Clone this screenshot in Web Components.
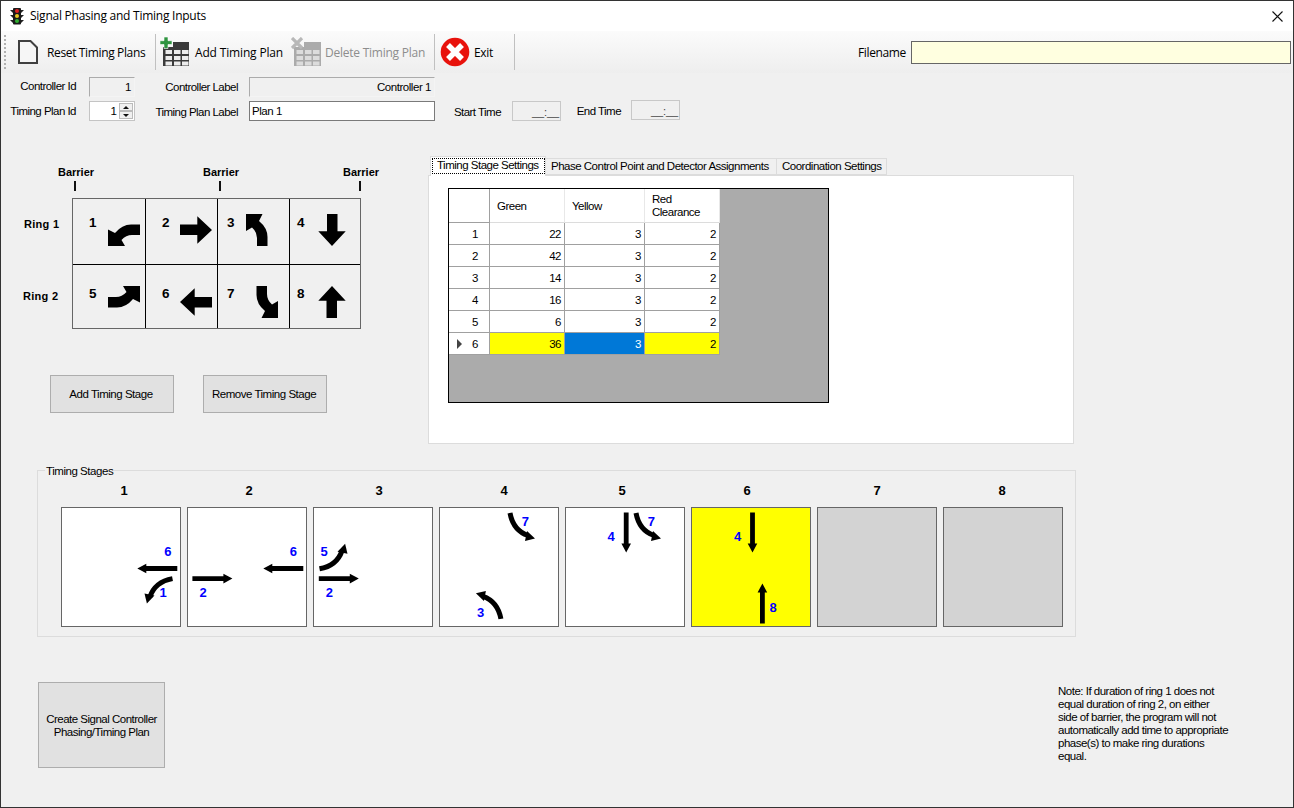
<!DOCTYPE html>
<html><head><meta charset="utf-8"><title>Signal Phasing and Timing Inputs</title>
<style>
html,body{margin:0;padding:0;background:#f0f0f0}
body{width:1294px;height:808px;overflow:hidden;font:11px/13px "Liberation Sans",Arial,sans-serif;color:#000}
</style></head><body>
<app-window>
  <title-bar>Signal Phasing and Timing Inputs</title-bar>
  <tool-strip>
    <tool-item style="margin-left:12px;width:127px" gap="9">
      <svg slot="icon" width="20" height="24" viewBox="0 0 20 24"><path d="M1 1H12.5L19 7.5V23H1Z" fill="#f6f6f6" stroke="#404040" stroke-width="2"/></svg>
      Reset Timing Plans</tool-item>
    <tool-sep style="margin-left:10px"></tool-sep>
    <tool-item style="margin-left:4px;width:124px;letter-spacing:-.16px" gap="5"><table-icon slot="icon" mode="add"></table-icon>Add Timing Plan</tool-item>
    <tool-item style="margin-left:7px;width:135px;letter-spacing:-.24px" gap="4" disabled><table-icon slot="icon" mode="del"></table-icon>Delete Timing Plan</tool-item>
    <tool-sep style="margin-left:8px"></tool-sep>
    <tool-item style="margin-left:5px;width:54px" gap="4">
      <svg slot="icon" width="30" height="30" viewBox="0 0 30 30"><circle cx="15" cy="15" r="14.3" fill="#e8120c"/><path d="M8 8L22 22M22 8L8 22" stroke="#fff" stroke-width="5.5" fill="none"/></svg>
      Exit</tool-item>
    <tool-sep style="margin-left:20px"></tool-sep>
    <file-name-field>Filename</file-name-field>
  </tool-strip>
  <form-grid>
    <form-label style="grid-area:1/1;padding-bottom:2px">Controller Id</form-label>
    <field-box style="grid-area:1/3" align="right">1</field-box>
    <form-label style="grid-area:1/4;margin-right:1px">Controller Label</form-label>
    <field-box style="grid-area:1/6" align="right">Controller 1</field-box>
    <form-label style="grid-area:2/1">Timing Plan Id</form-label>
    <spin-box style="grid-area:2/3">1</spin-box>
    <form-label style="grid-area:2/4;padding-top:2px;margin-right:1px">Timing Plan Label</form-label>
    <field-box style="grid-area:2/6" edit>Plan 1</field-box>
    <form-label style="grid-area:2/8;padding-top:2px;margin-right:1px">Start Time</form-label>
    <time-box style="grid-area:2/10"></time-box>
    <form-label style="grid-area:2/12">End Time</form-label>
    <time-box style="grid-area:2/14" up></time-box>
  </form-grid>
  <main-row>
    <phase-panel></phase-panel>
    <tab-panel>
      <data-grid></data-grid>
    </tab-panel>
  </main-row>
  <stage-group legend="Timing Stages">
    <stage-box n="1" off="63" items="w 76.5 61.5;c 111.5 71.6 90;t 6 106.8 43.7;t 1 102 84.7"></stage-box>
    <stage-box n="2" off="62" items="e 5.4 71.6;w 76.5 61.5;t 2 16 84.7;t 6 106.4 43.7"></stage-box>
    <stage-box n="3" off="66" items="e 5.8 71.6;c 6.5 61.8 -90;t 5 11.2 43.7;t 2 16.3 84.7"></stage-box>
    <stage-box n="4" off="65" items="c 71 6 0;c 61.9 111.9 180;t 7 86.4 13.8;t 3 41.5 104.5"></stage-box>
    <stage-box n="5" off="57" items="s 61.2 5.4;c 71 6 0;t 4 46.2 29.2;t 7 86.4 13.8"></stage-box>
    <stage-box n="6" off="56" fill="#ffff00" items="s 61.5 5.4;n 71.4 116.6;t 4 46.6 29.2;t 8 82 99.5"></stage-box>
    <stage-box n="7" off="60" fill="#d3d3d3"></stage-box>
    <stage-box n="8" off="59" fill="#d3d3d3"></stage-box>
  </stage-group>
  <bottom-row>
    <action-button style="width:127px;height:86px;padding-top:1px;letter-spacing:-.5px">Create Signal Controller<br>Phasing/Timing Plan</action-button>
    <note-text>Note: If duration of ring 1 does not<br>equal duration of ring 2, on either<br>side of barrier, the program will not<br>automatically add time to appropriate<br>phase(s) to make ring durations<br>equal.</note-text>
  </bottom-row>
</app-window>
<script>
const SEGOE='"Open Sans","Noto Sans",sans-serif';
const MS='"Liberation Sans",Arial,sans-serif';
function def(name,css,html,setup){
  customElements.define(name,class extends HTMLElement{
    constructor(){super();const s=this.attachShadow({mode:'open'});
      s.innerHTML='<style>'+css+'</style>'+(typeof html==='function'?html(this):html);}
    connectedCallback(){ if(setup) setup(this,this.shadowRoot); }
  });
}
def('app-window',`:host{display:flex;flex-direction:column;box-sizing:border-box;width:1294px;height:808px;border:1px solid #333;background:#f0f0f0;overflow:hidden}`,`<slot></slot>`);
def('title-bar',`:host{display:flex;align-items:center;height:30px;background:#fff;font:12px/16px ${SEGOE};letter-spacing:-.25px;flex:none}
  svg.i{margin-left:8px;margin-right:5px;flex:none} svg.x{margin-left:auto;margin-right:10px;flex:none}`,
 `<svg class="i" width="16" height="18" viewBox="0 0 16 18"><path d="M1 3h3v3zM15 3h-3v3zM1 8h3v3zM15 8h-3v3zM1 13h3v3zM15 13h-3v3z" fill="#222"/><rect x="4" y="1" width="8" height="16.5" rx="1" fill="#1a1a1a"/><circle cx="8" cy="4" r="2" fill="#e02020"/><circle cx="8" cy="9" r="2" fill="#e8c820"/><circle cx="8" cy="14" r="2" fill="#30b030"/></svg><span><slot></slot></span><svg class="x" width="11" height="11" viewBox="0 0 11 11"><path d="M.5 .5L10.5 10.5M10.5 .5L.5 10.5" stroke="#111" stroke-width="1.1" fill="none"/></svg>`);
def('tool-strip',`:host{display:flex;align-items:center;height:42px;flex:none;background:linear-gradient(#fbfbfb,#eeeeee)}
  .g{width:2px;height:34px;margin-left:3px;background:repeating-linear-gradient(#b0b0b0 0 2px,transparent 2px 4px);flex:none}`,`<div class="g"></div><slot></slot>`);
def('tool-item',`:host{display:flex;align-items:center;flex:none;font:12px/16px ${SEGOE};letter-spacing:-.36px;white-space:nowrap}
  :host([disabled]){color:#8d8d8d} .ic{display:flex;flex:none} .t{padding-top:2px}`,
 e=>`<span class="ic" style="margin-right:${e.getAttribute('gap')||6}px"><slot name="icon"></slot></span><span class="t"><slot></slot></span>`);
def('tool-sep',`:host{display:block;width:1px;height:36px;background:#c0c0c0;flex:none}`,``);
def('table-icon',`:host{display:block;width:30px;height:30px;flex:none}`,e=>{
  const del=e.getAttribute('mode')==='del',d=del?'#ababab':'#3a3a3a',c=del?'#dcdcdc':'#ececec';
  let cells='';for(const x of [5.5,14,22])for(const y of [13,19,24.5])cells+=`<rect x="${x}" y="${y}" width="6.5" height="4" fill="${c}"/>`;
  const top=del?`<path d="M1 1L11 11M11 1L1 11" stroke="#b8b8b8" stroke-width="3.2" fill="none"/>`:
   `<path d="M0 7.5V3.7H4V0H8V3.7H12V7.5H8V11.5H4V7.5Z" fill="#2f9440" stroke="#fff" stroke-width=".6"/>`;
  return `<svg width="30" height="30" viewBox="0 0 30 30"><path d="M3 10H13V5H${del?31:29}V29H3Z" fill="${d}"/>${cells}${top}</svg>`;});
def('file-name-field',`:host{display:flex;align-items:center;margin-left:343px;flex:none;font:12px/16px ${SEGOE};letter-spacing:-.36px}
  .l{width:53px;flex:none;padding-top:2px} .b{box-sizing:border-box;width:380px;height:23px;border:1px solid #666;background:#ffffe0}`,`<span class="l"><slot></slot></span><div class="b"></div>`);
def('form-grid',`:host{display:grid;flex:none;grid-template-columns:75px 13px 46px 104px 10px 186px 19px 48px 10px 49px 15px 45px 10px 49px;grid-template-rows:20px 20px;row-gap:4px;margin-top:4px}`,`<slot></slot>`);
def('form-label',`:host{display:flex;align-items:center;justify-content:flex-end;white-space:nowrap;font:11.5px/13px ${MS};letter-spacing:-.53px;box-sizing:border-box}`,`<slot></slot>`);
def('field-box',`:host{box-sizing:border-box;display:flex;align-items:center;padding:1px 3px 0 2px;height:20px;border:1px solid #ababab;border-right-color:#f4f4f4;border-bottom-color:#f4f4f4;background:#f0f0f0;font:11.5px/13px ${MS};letter-spacing:-.45px}
  :host([align=right]){justify-content:flex-end}:host([edit]){background:#fff;border-color:#7a7a7a}`,`<slot></slot>`);
def('spin-box',`:host{box-sizing:border-box;display:flex;align-items:center;justify-content:flex-end;height:20px;border:1px solid #c4c4c4;background:#fff;font:11.5px/13px ${MS}}
 .a{display:flex;flex-direction:column;width:14px;height:16px;margin-left:2px;margin-right:1px;flex:none}
 .a span{flex:1;background:#f0f0f0;display:flex;align-items:center;justify-content:center;border:1px solid #bbb}
 i{display:block;border-left:3px solid transparent;border-right:3px solid transparent}`,
 `<slot></slot><div class="a"><span><i style="border-bottom:3px solid #111"></i></span><span><i style="border-top:3px solid #111"></i></span></div>`);
def('time-box',`:host{box-sizing:border-box;display:flex;align-items:center;justify-content:flex-end;height:20px;border:1px solid #c8c8c8;background:#f0f0f0;font:11px/13px ${MS};color:#444;padding:2px 1px 0 0;letter-spacing:-.1px}
 :host([up]){margin-top:-1px}`,`__:__`);
def('main-row',`:host{display:flex;flex:none;margin-top:36px;height:286px}`,`<slot></slot>`);
const ARROW_STRAIGHT='M0 10.5H17.3V2.3L32 16L17.3 29.7V21H0Z';
const ARROW_TURN='M32 10.5H23Q14 10.5 7 19L0 15.5V32H17L13.5 26Q18 21 24 21H32Z';
function ph(n,nx,ix,top,ntop,kind,rot){return `<phase-cell n="${n}" nx="${nx}" ix="${ix}" top="${top}" ntop="${ntop}" kind="${kind}" rot="${rot}"></phase-cell>`;}
def('phase-cell',`:host{display:flex;align-items:flex-start;box-sizing:border-box;border-left:1px solid #000;border-top:1px solid #000}
 :host(.first){border-left:0} :host(.toprow){border-top:0}
 b{font:bold 13.5px/14px ${MS};width:8px;flex:none} svg{flex:none;display:block}`,
 e=>{const a=k=>e.getAttribute(k),nx=+a('nx'),ix=+a('ix');
  const p=a('kind')==='t'?ARROW_TURN:ARROW_STRAIGHT;
  return `<b style="margin-left:${nx}px;margin-top:${a('ntop')}px">${a('n')}</b><svg style="margin-left:${ix-nx-8}px;margin-top:${a('top')}px" width="32" height="32" viewBox="0 0 32 32"><path d="${p}" transform="rotate(${a('rot')} 16 16)" fill="#000"/></svg>`;},
 e=>{const n=+e.getAttribute('n'); if(n%4===1) e.classList.add('first'); if(n<=4) e.classList.add('toprow');});
def('barrier-mark',`:host{display:flex;flex-direction:column;align-items:center;width:60px;flex:none}
 b{font:bold 11px/14px ${MS}} i{display:block;width:2px;height:10px;background:#111;margin-top:2px;margin-right:3px}`,`<b>Barrier</b><i></i>`);
def('phase-panel',`:host{display:flex;flex-direction:column;width:427px;flex:none;padding-top:8px;box-sizing:border-box}
 .bars{display:flex;padding-left:45px;column-gap:85px} .bars barrier-mark:last-child{margin-left:-5px}
 .body{display:flex;margin-top:7px}
 .rings{width:71px;flex:none;font:bold 11px/14px ${MS};letter-spacing:.3px;padding:19px 0 0 23px;box-sizing:border-box}
 .rings div+div{margin-top:58px;margin-left:-1px}
 .t{display:grid;grid-template-columns:72px 72px 72px 71px;grid-template-rows:65px 65px;border:1px solid #666;width:287px;height:129px;overflow:hidden}
 .btns{display:flex;margin:46px 0 0 49px;column-gap:29px}`,
 `<div class="bars"><barrier-mark></barrier-mark><barrier-mark></barrier-mark><barrier-mark></barrier-mark></div>
 <div class="body"><div class="rings"><div>Ring 1</div><div>Ring 2</div></div><div class="t">
 ${ph(1,16,35,15,17,'t',0)}${ph(2,16,34,15,17,'s',0)}${ph(3,9,28,15,17,'t',90)}${ph(4,7,26,15,17,'s',90)}
 ${ph(5,16,35,21,22,'t',180)}${ph(6,16,34,21,22,'s',180)}${ph(7,9,28,21,22,'t',270)}${ph(8,7,26,21,22,'s',270)}
 </div></div>
 <div class="btns"><action-button style="width:124px;height:38px;padding-right:2px">Add Timing Stage</action-button><action-button style="width:124px;height:38px;padding-right:2px">Remove Timing Stage</action-button></div>`);
def('action-button',`:host{display:flex;align-items:center;justify-content:center;text-align:center;box-sizing:border-box;flex:none;background:#e1e1e1;border:1px solid #adadad;font:11.5px/13px ${MS};letter-spacing:-.47px}`,`<span><slot></slot></span>`);
def('tab-panel',`:host{display:flex;flex-direction:column;width:646px;flex:none;height:287px;font:11.5px/13px ${MS};letter-spacing:-.5px}
 .s{display:flex;align-items:flex-end;height:18px;padding-left:2px;flex:none}
 .tab{box-sizing:border-box;height:17px;border:1px solid #dcdcdc;border-left:0;background:#f0f0f0;display:flex;align-items:center;padding-left:5px;white-space:nowrap}
 .sel{height:20px;width:116px;margin-bottom:-1px;background:#fff;border:1px solid #dcdcdc;border-bottom:0;position:relative;z-index:1;padding:0;display:block}
 .sel span{display:block;box-sizing:border-box;height:16px;margin:1px 0 0 1px;width:113px;border:1px dotted #000;padding:0 0 0 4px;line-height:13px}
 .p{flex:1;background:#fff;border:1px solid #dcdcdc;padding:12px 0 0 19px}`,
 `<div class="s"><div class="tab sel"><span>Timing Stage Settings</span></div><div class="tab" style="width:231px">Phase Control Point and Detector Assignments</div><div class="tab" style="width:110px">Coordination Settings</div></div><div class="p"><slot></slot></div>`);
def('data-grid',`:host{display:block;box-sizing:border-box;width:381px;height:215px;border:1px solid #000;background:#ababab;font:11.5px/13px ${MS};letter-spacing:-.5px}
 .g{display:grid;grid-template-columns:41px 75px 80px 75px;grid-template-rows:34px repeat(6,22px);width:271px}
 .g>div{box-sizing:border-box;background:#fff;border-right:1px solid #a0a0a0;border-bottom:1px solid #a0a0a0;display:flex;align-items:center;justify-content:flex-end;padding:1px 3px 0 0}
 .g>.h{justify-content:flex-start;padding:1px 0 0 7px;border-right-color:#e8e8e8;border-bottom-color:#dcdcdc}
 .g>.h0{border-right-color:#a0a0a0;border-bottom-color:#a0a0a0;background:#fff}
 .g>.r{justify-content:flex-end;padding-right:11px}
 .g>.y{background:#ff0}.g>.b{background:#0078d7;color:#fff}
 i{display:block;margin-right:10px;border-left:5px solid #444;border-top:5px solid transparent;border-bottom:5px solid transparent}`,
 ()=>{const rows=[[22,3,2],[42,3,2],[14,3,2],[16,3,2],[6,3,2],[36,3,2]];
  let h=`<div class="g"><div class="h h0"></div><div class="h">Green</div><div class="h">Yellow</div><div class="h"><span>Red<br>Clearance</span></div>`;
  rows.forEach((r,i)=>{const last=i===5;
   h+=`<div class="r">${last?'<i></i>':''}${i+1}</div><div class="${last?'y':''}">${r[0]}</div><div class="${last?'b':''}">${r[1]}</div><div class="${last?'y':''}">${r[2]}</div>`;});
  return h+'</div>';});
def('stage-group',`:host{display:block;box-sizing:border-box;width:1039px;height:167px;margin:27px 0 0 36px;border:1px solid #dcdcdc;flex:none}
 .l{width:fit-content;margin:-6px 0 0 7px;padding:0 1px;background:#f0f0f0;font:11.5px/13px ${MS};letter-spacing:-.45px}
 .g{display:grid;grid-template-columns:repeat(8,120px);column-gap:6px;margin:0 0 0 23px}`,
 e=>`<div class="l">${e.getAttribute('legend')}</div><div class="g"><slot></slot></div>`);
function thin(x,y,rot){return `<polygon transform="translate(${x} ${y}) rotate(${rot})" points="0,-2.4 31,-2.4 31,-4.8 40,0 31,4.8 31,2.4 0,2.4"/>`;}
function curve(x,y,rot){return `<g transform="translate(${x} ${y}) rotate(${rot})"><path d="M0 0C2 11 8 19 18 22.5" fill="none" stroke="#000" stroke-width="5"/><polygon points="25,25.6 15,28 17,18"/></g>`;}
def('stage-box',`:host{display:flex;flex-direction:column}
 .n{font:bold 13px/15px ${MS};height:15px;margin-top:5px;width:12px;text-align:center}
 .b{box-sizing:border-box;width:120px;height:120px;margin-top:9px;border:1px solid #666;background:#fff;display:block}
 svg{display:block} text{font:bold 13px "Liberation Sans",Arial,sans-serif;fill:#0000ff;text-anchor:middle}`,
 e=>{let s='';const fill=e.getAttribute('fill')||'#fff';
  (e.getAttribute('items')||'').split(';').filter(Boolean).forEach(it=>{const p=it.trim().split(' ');
   const X=+p[1],Y=+p[2];
   if(p[0]==='e')s+=thin(X,Y,0);
   if(p[0]==='w')s+=thin(X+39.8,Y,180);
   if(p[0]==='s')s+=thin(X,Y,90);
   if(p[0]==='n')s+=thin(X,Y,-90);
   if(p[0]==='c')s+=curve(X,Y,+p[3]);
   if(p[0]==='t')s+=`<text x="${p[2]}" y="${+p[3]+5}">${p[1]}</text>`;});
  return `<div class="n" style="margin-left:${+e.getAttribute('off')-6}px">${e.getAttribute('n')}</div><div class="b" style="background:${fill}"><svg width="118" height="118" viewBox="1 1 118 118">${s}</svg></div>`;});
def('bottom-row',`:host{display:flex;margin:45px 0 0 37px;flex:none;align-items:flex-start}`,`<slot></slot>`);
def('note-text',`:host{display:block;margin:3px 0 0 893px;white-space:nowrap;font:11.5px/13px ${MS};letter-spacing:-.5px}`,`<slot></slot>`);
</script>
</body></html>
